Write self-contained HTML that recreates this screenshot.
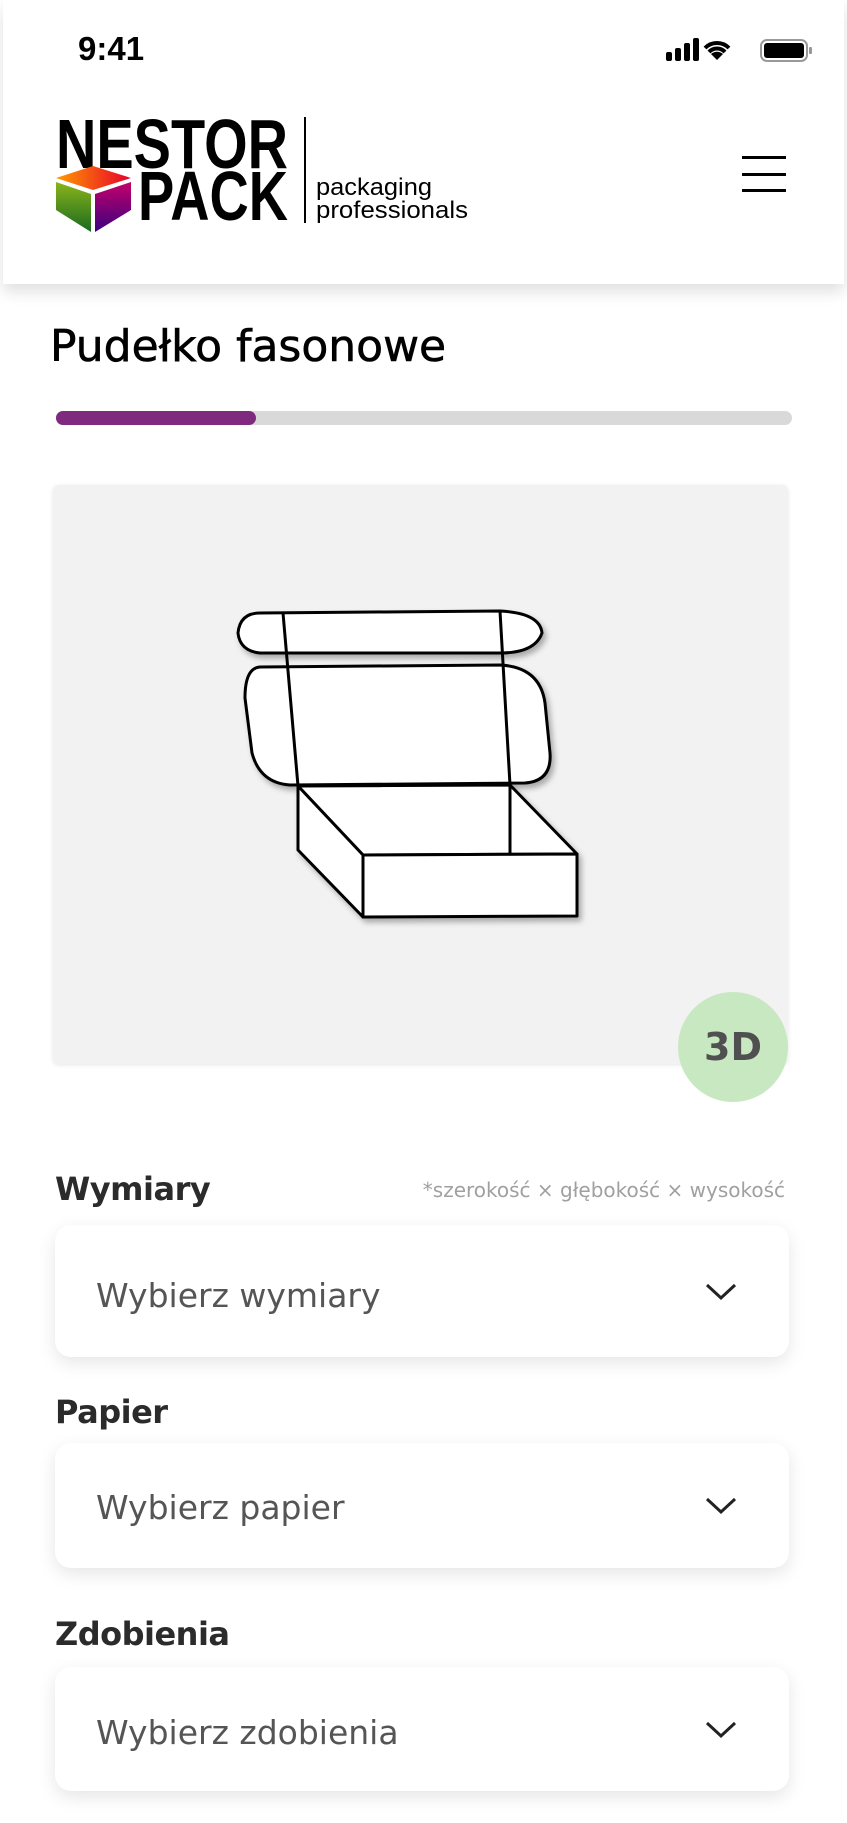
<!DOCTYPE html>
<html><head><meta charset="utf-8">
<style>
*{margin:0;padding:0;box-sizing:border-box}
body{width:847px;height:1823px;background:#fff;position:relative;overflow:hidden;font-family:"DejaVu Sans","Liberation Sans",sans-serif}
.hdr{position:absolute;left:3px;top:0;width:841px;height:284px;background:#fff;box-shadow:0 8px 14px rgba(0,0,0,0.12);z-index:2}
.abs{position:absolute}
.lbl{position:absolute;left:55px;font-size:32px;color:#2b2b2b;font-weight:bold;letter-spacing:-0.5px}
.sel{position:absolute;left:55px;width:734px;background:#fff;border-radius:16px;box-shadow:0 6px 18px rgba(0,0,0,0.10)}
.sel span{position:absolute;left:41px;font-size:33px;color:#555}
.sel svg{position:absolute;right:52px}
</style></head><body>
<div class="hdr">
 <div class="abs" style="left:75px;top:30px;font-family:'Liberation Sans',sans-serif;font-weight:bold;font-size:33px;color:#000">9:41</div>
 <svg class="abs" style="left:660px;top:36px" width="160" height="28" viewBox="0 0 160 28">
  <rect x="3" y="16" width="6" height="9" rx="2" fill="#000"/>
  <rect x="12" y="12" width="6" height="13" rx="2" fill="#000"/>
  <rect x="21" y="7" width="6" height="18" rx="2" fill="#000"/>
  <rect x="30" y="2" width="6" height="23" rx="2" fill="#000"/>
  <path d="M54 24 L48 18 A9 9 0 0 1 60 18 Z" fill="#000"/>
  <path d="M42 12 A17 17 0 0 1 66 12" stroke="#000" stroke-width="4" fill="none"/>
  <path d="M46 16 A11 11 0 0 1 62 16" stroke="#000" stroke-width="4" fill="none"/>
  <rect x="98" y="4" width="46" height="21" rx="6" fill="none" stroke="#999" stroke-width="2"/>
  <rect x="101" y="7" width="40" height="15" rx="3" fill="#000"/>
  <rect x="146" y="11" width="3" height="7" rx="1" fill="#999"/>
 </svg>
 <svg class="abs" style="left:50px;top:110px" width="420" height="125" viewBox="0 0 420 125">
  <defs>
   <linearGradient id="g1" x1="0" y1="0" x2="1" y2="0"><stop offset="0" stop-color="#ff9a00"/><stop offset="1" stop-color="#e8002a"/></linearGradient>
   <linearGradient id="g2" x1="0" y1="0" x2="0" y2="1"><stop offset="0" stop-color="#8ab41a"/><stop offset="1" stop-color="#1a6a20"/></linearGradient>
   <linearGradient id="g3" x1="0" y1="0" x2="0" y2="1"><stop offset="0" stop-color="#c4006a"/><stop offset="1" stop-color="#3a0080"/></linearGradient>
  </defs>
  <text x="3" y="58" font-family="Liberation Sans,sans-serif" font-weight="bold" font-size="70" textLength="232" lengthAdjust="spacingAndGlyphs">NESTOR</text>
  <polygon points="3,68 40,56 78,68 40,80" fill="url(#g1)"/>
  <polygon points="3,72 38,84 38,122 3,100" fill="url(#g2)"/>
  <polygon points="42,84 78,72 78,100 42,122" fill="url(#g3)"/>
  <text x="85" y="110" font-family="Liberation Sans,sans-serif" font-weight="bold" font-size="70" textLength="150" lengthAdjust="spacingAndGlyphs">PACK</text>
  <rect x="251" y="7" width="2" height="106" fill="#000"/>
  <text x="263" y="85" font-family="Liberation Sans,sans-serif" font-size="24" textLength="116" lengthAdjust="spacingAndGlyphs">packaging</text>
  <text x="263" y="108" font-family="Liberation Sans,sans-serif" font-size="24" textLength="152" lengthAdjust="spacingAndGlyphs">professionals</text>
 </svg>
 <div class="abs" style="left:739px;top:156px;width:44px;height:3px;background:#000"></div>
 <div class="abs" style="left:739px;top:173px;width:44px;height:3px;background:#000"></div>
 <div class="abs" style="left:739px;top:189px;width:44px;height:3px;background:#000"></div>
</div>
<div class="abs" style="left:50px;top:321px;font-size:44px;color:#000;-webkit-text-stroke:0.6px #000">Pudełko fasonowe</div>
<div class="abs" style="left:56px;top:411px;width:736px;height:14px;border-radius:7px;background:#d9d9d9"></div>
<div class="abs" style="left:56px;top:411px;width:200px;height:14px;border-radius:7px;background:#7f2a7f"></div>
<div class="abs" style="left:53px;top:485px;width:735px;height:579px;background:#f2f2f2;border-radius:6px;box-shadow:0 1px 4px rgba(0,0,0,0.1)"></div>
<svg class="abs" style="left:230px;top:603px" width="360" height="330" viewBox="0 0 360 330" fill="#fff" stroke="#000" stroke-width="3" stroke-linejoin="round">
 <g style="filter:drop-shadow(3px 4px 3px rgba(0,0,0,0.3))">
 <path d="M30 10 L270 8 Q310 10 312 30 Q305 50 270 50 L30 50 Q10 48 8 30 Q10 10 30 10 Z"/>
 <path d="M30 64 L270 62 Q310 64 315 100 L320 150 Q322 178 295 180 L60 182 Q30 180 22 150 L15 95 Q15 65 30 64 Z"/>
 <path d="M68 183 L280 182 L347 251 L133 252 Z"/>
 <path d="M68 183 L68 247 L133 314 L133 252 Z"/>
 <path d="M133 252 L347 251 L347 313 L133 314 Z"/>
 </g>
 <path d="M53 10 L68 183 M270 8 L280 182 M280 182 L280 250" fill="none"/>
</svg>
<div class="abs" style="left:678px;top:992px;width:110px;height:110px;border-radius:55px;background:#c8e8c2;text-align:center;line-height:110px;font-size:38px;font-weight:bold;color:#505050">3D</div>
<div class="lbl" style="top:1170px">Wymiary</div>
<div class="abs" style="right:62px;top:1178px;font-size:20px;color:#a0a0a0">*szerokość × głębokość × wysokość</div>
<div class="sel" style="top:1225px;height:132px"><span style="top:51px">Wybierz wymiary</span>
 <svg style="top:58px" width="32" height="18" viewBox="0 0 32 18"><path d="M2 2 L16 15 L30 2" stroke="#222" stroke-width="3" fill="none"/></svg></div>
<div class="lbl" style="top:1393px">Papier</div>
<div class="sel" style="top:1443px;height:125px"><span style="top:45px">Wybierz papier</span>
 <svg style="top:54px" width="32" height="18" viewBox="0 0 32 18"><path d="M2 2 L16 15 L30 2" stroke="#222" stroke-width="3" fill="none"/></svg></div>
<div class="lbl" style="top:1615px">Zdobienia</div>
<div class="sel" style="top:1667px;height:124px"><span style="top:46px">Wybierz zdobienia</span>
 <svg style="top:54px" width="32" height="18" viewBox="0 0 32 18"><path d="M2 2 L16 15 L30 2" stroke="#222" stroke-width="3" fill="none"/></svg></div>
</body></html>
